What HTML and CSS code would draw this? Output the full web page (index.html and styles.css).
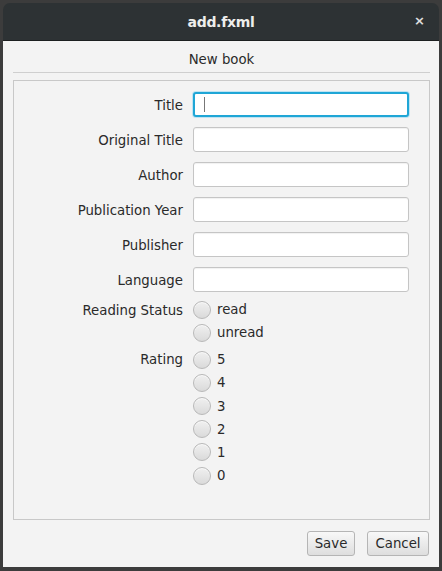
FILE: index.html
```html
<!DOCTYPE html>
<html>
<head>
<meta charset="utf-8">
<link rel="stylesheet" href="styles.css">
</head>
<body>
<div class="window">
  <div class="titlebar">
    <span class="title">add.fxml</span>
    <span class="close">×</span>
  </div>
  <div class="content">
    <div class="header">New book</div>
    <div class="formbox">
      <div class="form">
        <label class="lbl">Title</label>
        <div class="field focused"><span class="caret"></span></div>
        <label class="lbl">Original Title</label>
        <div class="field"></div>
        <label class="lbl">Author</label>
        <div class="field"></div>
        <label class="lbl">Publication Year</label>
        <div class="field"></div>
        <label class="lbl">Publisher</label>
        <div class="field"></div>
        <label class="lbl">Language</label>
        <div class="field"></div>
        <label class="lbl lbl-radio">Reading Status</label>
        <div class="radios">
          <div class="radio"><span class="dot"></span><span>read</span></div>
          <div class="radio"><span class="dot"></span><span>unread</span></div>
        </div>
        <label class="lbl lbl-radio">Rating</label>
        <div class="radios">
          <div class="radio"><span class="dot"></span><span>5</span></div>
          <div class="radio"><span class="dot"></span><span>4</span></div>
          <div class="radio"><span class="dot"></span><span>3</span></div>
          <div class="radio"><span class="dot"></span><span>2</span></div>
          <div class="radio"><span class="dot"></span><span>1</span></div>
          <div class="radio"><span class="dot"></span><span>0</span></div>
        </div>
      </div>
    </div>
    <div class="buttons">
      <button class="btn btn-save">Save</button>
      <button class="btn btn-cancel">Cancel</button>
    </div>
  </div>
</div>
</body>
</html>
```
FILE: styles.css
```css
html, body {
  margin: 0;
  padding: 0;
  background: #3c3c3c;
  width: 442px;
  height: 571px;
  overflow: hidden;
}
.window {
  margin: 3px 3px 0 3px;
  width: 436px;
  height: 564px;
  display: flex;
  flex-direction: column;
  font-family: "DejaVu Sans", sans-serif;
  font-size: 12px;
  color: #333;
}
.titlebar {
  height: 37px;
  background: #2d3234;
  border-radius: 7px 7px 0 0;
  border-bottom: 1px solid #1c1f20;
  display: flex;
  align-items: center;
  justify-content: center;
  position: relative;
}
.title {
  color: #eeeeec;
  font-family: "DejaVu Sans", sans-serif;
  font-weight: bold;
  font-size: 14px;
  letter-spacing: -0.3px;
}
.close {
  position: absolute;
  right: 14px;
  top: 10px;
  color: #e0e0e0;
  font-size: 13px;
  font-weight: bold;
}
.content {
  flex: 1;
  background: #f3f3f3;
  display: flex;
  flex-direction: column;
  padding: 0 9px 0 10px;
}
.header {
  text-align: center;
  color: #2a2a2a;
  font-size: 13.3px;
  padding-top: 11px;
  height: 20px;
  border-bottom: 1px solid #cfcfcf;
}
.formbox {
  margin-top: 7px;
  height: 440px;
  border: 1px solid #c8c8c8;
  box-sizing: border-box;
}
.form {
  display: grid;
  grid-template-columns: 169px 216px;
  column-gap: 10px;
  row-gap: 10px;
  padding-top: 11px;
}
.lbl {
  text-align: right;
  align-self: center;
  font-size: 13.3px;
  color: #2a2a2a;
  padding-top: 1px;
}
.lbl-radio {
  align-self: start;
  line-height: 17px;
  margin-top: 0;
  padding-top: 0;
}
.field {
  height: 25px;
  box-sizing: border-box;
  background: #fff;
  border: 1px solid #c5c5c5;
  border-radius: 3px;
  box-shadow: inset 0 1px 1px rgba(0,0,0,0.06);
  display: flex;
  align-items: center;
}
.field.focused {
  border: 2px solid #1fa6d6;
  box-shadow: 0 0 0 1px #bfe3f2;
}
.caret {
  width: 1px;
  height: 15px;
  background: #777;
  margin-left: 9px;
}
.radios {
  display: flex;
  flex-direction: column;
  gap: 6.2px;
  margin-top: -1px;
}
.radios + .lbl-radio {
  margin-top: 0;
}
.radios + .lbl-radio + .radios {
  margin-top: 0;
}
.radio {
  display: flex;
  align-items: center;
  gap: 6px;
  height: 17px;
  font-size: 13.3px;
  color: #2a2a2a;
}
.dot {
  width: 16px;
  height: 16px;
  border-radius: 50%;
  border: 1px solid #b8b8b8;
  background: linear-gradient(#f0f0f0, #dadada);
  box-shadow: inset 0 1px 0 #fafafa;
}
.buttons {
  display: flex;
  justify-content: flex-end;
  gap: 12px;
  margin-top: 11px;
  padding-right: 1px;
}
.btn {
  height: 25px;
  box-sizing: border-box;
  border: 1px solid #b5b5b5;
  border-radius: 3px;
  background: linear-gradient(#f8f8f8, #dedede);
  font-family: "DejaVu Sans", sans-serif;
  font-size: 13.3px;
  color: #2a2a2a;
  padding: 0;
}
.btn-save { width: 48px; }
.btn-cancel { width: 62px; }
```
